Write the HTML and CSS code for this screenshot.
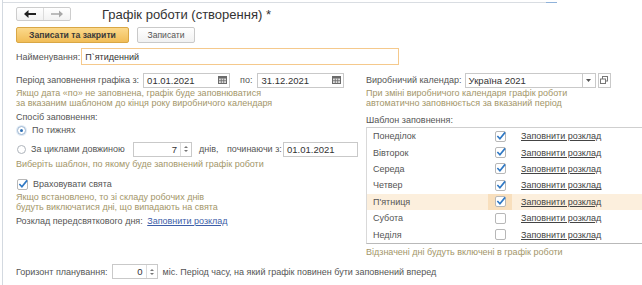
FILE: index.html
```html
<!DOCTYPE html>
<html lang="uk">

<head>
    <meta charset="UTF-8">
    <meta name="viewport" content="width=device-width, initial-scale=1.0">
    <title>Графік роботи (створення)</title>
    <link rel="stylesheet" href="styles.css">
</head>

<body>
    <div class="window">
        <div class="topline"><span class="topline-accent"></span></div>

        <div class="head">
            <div class="nav">
                <span class="nav-btn">
                    <svg width="12" height="8" viewBox="0 0 12 8"><path d="M0 4 L4.5 0 V3 H12 V5 H4.5 V8 Z" fill="#222"/></svg>
                </span>
                <span class="nav-btn">
                    <svg width="12" height="8" viewBox="0 0 12 8"><path d="M12 4 L8 0.5 V3.3 H0 V4.7 H8 V7.5 Z" fill="#a8a8a8"/></svg>
                </span>
            </div>
            <h1 class="title">Графік роботи (створення) *</h1>
        </div>

        <div class="toolbar">
            <span class="btn btn-primary">Записати та закрити</span>
            <span class="btn">Записати</span>
        </div>

        <div class="field name-field">
            <span class="label">Найменування:</span>
            <span class="input input-focus name-input">П`ятиденний</span>
        </div>

        <div class="columns">
            <div class="col">
                <div class="field period-row">
                    <span class="label">Період заповнення графіка з:</span>
                    <span class="input date-input">
                        <span class="value">01.01.2021</span>
                        <span class="cal-icon"><svg width="9" height="8" viewBox="0 0 9 8"><rect x="0" y="0" width="9" height="8" fill="#6b6b6b"/><path d="M1 2.5h7v4.5h-7z" fill="#ddd"/><path d="M3.3 2.5v4.5M5.7 2.5v4.5M1 4.7h7" stroke="#6b6b6b" stroke-width="0.8"/></svg></span>
                    </span>
                    <span class="label to-label">по:</span>
                    <span class="input date-input">
                        <span class="value">31.12.2021</span>
                        <span class="cal-icon"><svg width="9" height="8" viewBox="0 0 9 8"><rect x="0" y="0" width="9" height="8" fill="#6b6b6b"/><path d="M1 2.5h7v4.5h-7z" fill="#ddd"/><path d="M3.3 2.5v4.5M5.7 2.5v4.5M1 4.7h7" stroke="#6b6b6b" stroke-width="0.8"/></svg></span>
                    </span>
                </div>
                <p class="hint">Якщо дата «по» не заповнена, графік буде заповнюватися<br>за вказаним шаблоном до кінця року виробничого календаря</p>

                <div class="caption method-caption">Спосіб заповнення:</div>
                <div class="option weeks-option"><span class="radio checked"></span>По тижнях</div>
                <div class="field cycle-option">
                    <span class="radio"></span>
                    <span class="cycle-label">За циклами довжиною</span>
                    <span class="input spin-input cycle-input">
                        <span class="value">7</span>
                        <span class="spin"><span class="spin-up"></span><span class="spin-down"></span></span>
                    </span>
                    <span class="label days-label">днів,</span>
                    <span class="label since-label">починаючи з:</span>
                    <span class="input start-input">01.01.2021</span>
                </div>
                <p class="hint cycle-hint">Виберіть шаблон, по якому буде заповнений графік роботи</p>

                <div class="option holidays-option">
                    <span class="checkbox"><svg width="11" height="10" viewBox="0 0 11 10"><path d="M1.5 5 L4.3 8 L10 1" fill="none" stroke="#2f78c4" stroke-width="1.8"/></svg></span>
                    Враховувати свята
                </div>
                <p class="hint holidays-hint">Якщо встановлено, то зі складу робочих днів<br>будуть виключатися дні, що випадають на свята</p>

                <div class="caption preholiday">Розклад передсвяткового дня: <a href="#" class="link">Заповнити розклад</a></div>
            </div>

            <div class="col col-right">
                <div class="field calendar-row">
                    <span class="label">Виробничий календар:</span>
                    <span class="input calendar-input">Україна 2021</span>
                    <span class="square-btn"><svg width="5" height="3" viewBox="0 0 5 3"><path d="M0 0h5L2.5 3z" fill="#555"/></svg></span>
                    <span class="square-btn"><svg width="8" height="8" viewBox="0 0 8 8"><rect x="2.5" y="0.5" width="5" height="4.5" fill="none" stroke="#777"/><rect x="0.5" y="3" width="5" height="4.5" fill="#fff" stroke="#777"/></svg></span>
                </div>
                <p class="hint">При зміні виробничого календаря графік роботи<br>автоматично заповнюється за вказаний період</p>

                <div class="caption template-caption">Шаблон заповнення:</div>
                <div class="days">
                    <div class="day-row"><span class="day-name">Понеділок</span><span class="day-check"><span class="checkbox"><svg width="11" height="10" viewBox="0 0 11 10"><path d="M1.5 5 L4.3 8 L10 1" fill="none" stroke="#2f78c4" stroke-width="1.8"/></svg></span></span><a href="#" class="day-link">Заповнити розклад</a></div>
                    <div class="day-row"><span class="day-name">Вівторок</span><span class="day-check"><span class="checkbox"><svg width="11" height="10" viewBox="0 0 11 10"><path d="M1.5 5 L4.3 8 L10 1" fill="none" stroke="#2f78c4" stroke-width="1.8"/></svg></span></span><a href="#" class="day-link">Заповнити розклад</a></div>
                    <div class="day-row"><span class="day-name">Середа</span><span class="day-check"><span class="checkbox"><svg width="11" height="10" viewBox="0 0 11 10"><path d="M1.5 5 L4.3 8 L10 1" fill="none" stroke="#2f78c4" stroke-width="1.8"/></svg></span></span><a href="#" class="day-link">Заповнити розклад</a></div>
                    <div class="day-row"><span class="day-name">Четвер</span><span class="day-check"><span class="checkbox"><svg width="11" height="10" viewBox="0 0 11 10"><path d="M1.5 5 L4.3 8 L10 1" fill="none" stroke="#2f78c4" stroke-width="1.8"/></svg></span></span><a href="#" class="day-link">Заповнити розклад</a></div>
                    <div class="day-row current"><span class="day-name">П'ятниця</span><span class="day-check"><span class="checkbox"><svg width="11" height="10" viewBox="0 0 11 10"><path d="M1.5 5 L4.3 8 L10 1" fill="none" stroke="#2f78c4" stroke-width="1.8"/></svg></span></span><a href="#" class="day-link">Заповнити розклад</a></div>
                    <div class="day-row"><span class="day-name">Субота</span><span class="day-check"><span class="checkbox"></span></span><a href="#" class="day-link">Заповнити розклад</a></div>
                    <div class="day-row"><span class="day-name">Неділя</span><span class="day-check"><span class="checkbox"></span></span><a href="#" class="day-link">Заповнити розклад</a></div>
                </div>
                <p class="hint days-hint">Відзначені дні будуть включені в графік роботи</p>
            </div>
        </div>

        <div class="field horizon-row">
            <span class="label">Горизонт планування:</span>
            <span class="input spin-input horizon-input">
                <span class="value">0</span>
                <span class="spin"><span class="spin-up"></span><span class="spin-down"></span></span>
            </span>
            <span class="label">міс. Період часу, на який графік повинен бути заповнений вперед</span>
        </div>
    </div>
</body>

</html>
```

FILE: styles.css
```css
body {
    margin: 0;
    font-family: Arial, "Liberation Sans", sans-serif;
    font-size: 9px;
    color: #555;
    background: #fff;
    overflow: hidden;
}

.window {
    margin-left: 2px;
    height: 285px;
    border-left: 1px solid #d3d9e0;
    padding-left: 13px;
    box-sizing: border-box;
    overflow: hidden;
    white-space: nowrap;
}

.topline {
    display: flex;
    justify-content: flex-end;
    width: 554px;
    height: 1px;
    margin: 2px 0 0 -13px;
    background: #d9dde2;
}

.topline-accent {
    width: 11px;
    background: #8fb2da;
}

/* header */

.head {
    display: flex;
    align-items: center;
    margin-top: 4px;
    height: 14px;
}

.nav {
    display: flex;
    height: 14px;
    border: 1px solid #cdcdcd;
    border-radius: 2px;
    box-sizing: border-box;
    background: linear-gradient(#fff, #f2f2f2);
}

.nav-btn {
    display: flex;
    align-items: center;
    justify-content: center;
    width: 26px;
}

.nav-btn + .nav-btn {
    border-left: 1px solid #dcdcdc;
}

.title {
    margin: 0 0 0 31px;
    font-size: 13px;
    font-weight: normal;
    color: #333;
}

.toolbar {
    display: flex;
    gap: 8px;
    margin-top: 6px;
}

.btn {
    display: flex;
    align-items: center;
    justify-content: center;
    height: 16px;
    width: 58px;
    border: 1px solid #c9c9c9;
    border-radius: 2px;
    box-sizing: border-box;
    background: linear-gradient(#fff, #f1f1f1);
    font-size: 8.6px;
    color: #555;
}

.btn-primary {
    width: 113px;
    border-color: #d9a745;
    background: linear-gradient(#fbd98c, #f1bd57);
    font-weight: bold;
    color: #3a3a3a;
}

/* fields */

.field {
    display: flex;
    align-items: center;
}

.input {
    display: flex;
    align-items: center;
    height: 15px;
    padding: 0 3px;
    border: 1px solid #c9c9c9;
    box-sizing: border-box;
    background: #fff;
    font-size: 9.5px;
    color: #333;
}

.input-focus {
    border-color: #f5c98c;
}

.name-field {
    margin-top: 5px;
}

.name-input {
    margin-left: 1px;
    width: 318px;
    height: 17px;
    font-size: 9px;
}

.columns {
    display: grid;
    grid-template-columns: 350px 290px;
    margin-top: 7px;
}

.period-row {
    height: 16px;
}

.date-input {
    justify-content: space-between;
    margin-left: 4px;
    width: 87px;
    padding-right: 0;
}

.cal-icon {
    display: flex;
    align-items: center;
    justify-content: center;
    width: 14px;
    height: 100%;
}

.to-label {
    margin-left: 10px;
    margin-right: 1px;
}

.hint {
    margin: 0;
    line-height: 10px;
    color: #a39669;
}

.caption {
    line-height: 10px;
}

.method-caption {
    margin-top: 4px;
}

.option {
    display: flex;
    align-items: center;
    gap: 6px;
    height: 12px;
}

.weeks-option {
    margin-top: 2px;
}

.radio {
    width: 9px;
    height: 9px;
    border: 1px solid #aeb4bb;
    border-radius: 50%;
    box-sizing: border-box;
    margin-left: 1px;
    background: #fff;
    position: relative;
}

.radio.checked {
    border-color: #9fb7d2;
    box-shadow: 0 0 0 1px #e1ebf5;
}

.radio.checked::after {
    content: "";
    position: absolute;
    left: 2px;
    top: 2px;
    width: 3px;
    height: 3px;
    border-radius: 50%;
    background: #2d6fb5;
}

.cycle-option {
    margin-top: 5px;
    height: 16px;
}

.cycle-label {
    margin-left: 5px;
    width: 102px;
}

.spin-input {
    justify-content: flex-end;
    padding-right: 0;
}

.cycle-input {
    width: 59px;
}

.spin {
    display: flex;
    flex-direction: column;
    justify-content: center;
    gap: 2px;
    width: 10px;
    height: 100%;
    margin-left: 3px;
    border-left: 1px solid #dcdcdc;
    align-items: center;
}

.spin-up {
    border: 2px solid transparent;
    border-top: 0;
    border-bottom: 2px solid #777;
}

.spin-down {
    border: 2px solid transparent;
    border-bottom: 0;
    border-top: 2px solid #777;
}

.days-label {
    margin-left: 7px;
    width: 26px;
}

.since-label {
    margin-left: 2px;
    width: 55px;
}

.start-input {
    margin-left: 1px;
    width: 75px;
}

.cycle-hint {
    margin-top: 2px;
}

.holidays-option {
    margin-top: 9px;
    gap: 5px;
}

.checkbox {
    display: flex;
    align-items: center;
    justify-content: center;
    width: 11px;
    height: 11px;
    border: 1px solid #b7b7b7;
    border-radius: 2px;
    box-sizing: border-box;
    background: #fff;
    margin-left: 1px;
}

.checkbox svg {
    margin: -1px -1px 0 0;
}

.holidays-hint {
    margin-top: 2px;
}

.preholiday {
    margin-top: 4px;
}

.link {
    margin-left: 2px;
    color: #3d5ea8;
}

/* right column */

.calendar-row {
    height: 16px;
}

.calendar-input {
    margin-left: 3px;
    width: 118px;
}

.square-btn {
    display: flex;
    align-items: center;
    justify-content: center;
    width: 13px;
    height: 15px;
    border: 1px solid #c9c9c9;
    border-left: 0;
    box-sizing: border-box;
}

.square-btn + .square-btn {
    margin-left: 2px;
    border-left: 1px solid #c9c9c9;
}

.template-caption {
    margin-top: 7px;
}

.days {
    margin-top: 2px;
    width: 290px;
    border-top: 1px solid #cfcfcf;
    border-left: 1px solid #d9d9d9;
    border-bottom: 1px solid #b9b9b9;
}

.day-row {
    display: flex;
    align-items: center;
    height: 16.4px;
}

.day-row.current {
    background: #fcefdd;
}

.day-name {
    width: 115px;
    padding-left: 6px;
}

.day-check {
    display: flex;
    align-items: center;
    height: 100%;
    width: 24px;
    padding-left: 6px;
    box-sizing: border-box;
}

.current .day-check {
    background: #f8dfbd;
}

.day-link {
    margin-left: 9px;
    color: #444;
}

.days-hint {
    margin-top: 3px;
}

/* bottom */

.horizon-row {
    margin-top: 7px;
    height: 16px;
}

.horizon-input {
    margin: 0 5px 0 4px;
    width: 46px;
}
```
